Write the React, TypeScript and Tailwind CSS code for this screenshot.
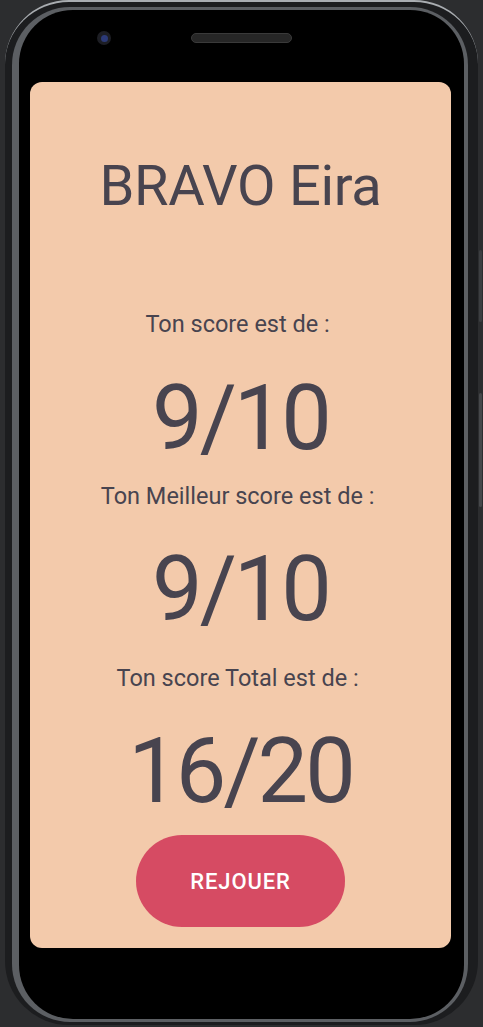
export default function App() {
  return (
    <div className="relative w-[483px] h-[1027px] overflow-hidden bg-[#2c2d2f] pl-[5px] pr-[5px] font-['Roboto',sans-serif]">
      {/* side buttons */}
      <div className="absolute right-[1px] top-[250px] h-[72px] w-[3px] rounded-sm bg-[#3c3e41]" />
      <div className="absolute right-[1px] top-[393px] h-[114px] w-[3px] rounded-sm bg-[#45474a]" />

      {/* phone shell */}
      <div className="h-[1025px] rounded-[64px] border-t-2 border-[#a9adb1] bg-[#1c1d1f] pl-[7px] pr-[10px] pt-[5px] pb-[3px]">
        <div className="h-full rounded-[58px] bg-[#5c5f63] pl-[7px] pr-[4px] pt-[3px] pb-[3px]">
          <div className="flex h-full flex-col rounded-[54px] bg-black pl-[11px] pr-[13px]">
            {/* top bezel */}
            <div className="flex h-[72px] items-start">
              <div className="ml-[67px] mt-[21px] flex h-[14px] w-[14px] items-center justify-center rounded-full bg-[#1d1e24]">
                <div className="h-[7px] w-[7px] rounded-full bg-[#2c3a78]" />
              </div>
              <div className="ml-[80px] mt-[23px] h-[10px] w-[101px] rounded-full border border-[#3a3a3a] bg-[#262626]" />
            </div>

            {/* screen */}
            <div className="flex h-[866px] flex-col items-center rounded-[12px] bg-[#f3caab] text-[#48444f]">
              <h1 className="mt-[76px] text-[56px] leading-[56px] tracking-[-0.3px]">BRAVO Eira</h1>

              <p className="mt-[98px] text-[23.5px] leading-[24px]">Ton score est de :&nbsp;</p>
              <p className="mt-[38px] text-[90px] leading-[90px] tracking-[-3px]">9/10</p>

              <p className="mt-[20px] text-[23.5px] leading-[24px]">Ton Meilleur score est de :&nbsp;</p>
              <p className="mt-[37px] text-[90px] leading-[90px] tracking-[-3px]">9/10</p>

              <p className="mt-[31px] text-[23.5px] leading-[24px]">Ton score Total est de :&nbsp;</p>
              <p className="mt-[37px] text-[90px] leading-[90px] tracking-[-3px]">16/20</p>

              <button className="mt-[18px] flex h-[92px] w-[209px] items-center justify-center rounded-full bg-[#d64b63] text-[22px] font-medium tracking-[0.04em] text-white">
                REJOUER
              </button>
            </div>
          </div>
        </div>
      </div>
    </div>
  );
}
